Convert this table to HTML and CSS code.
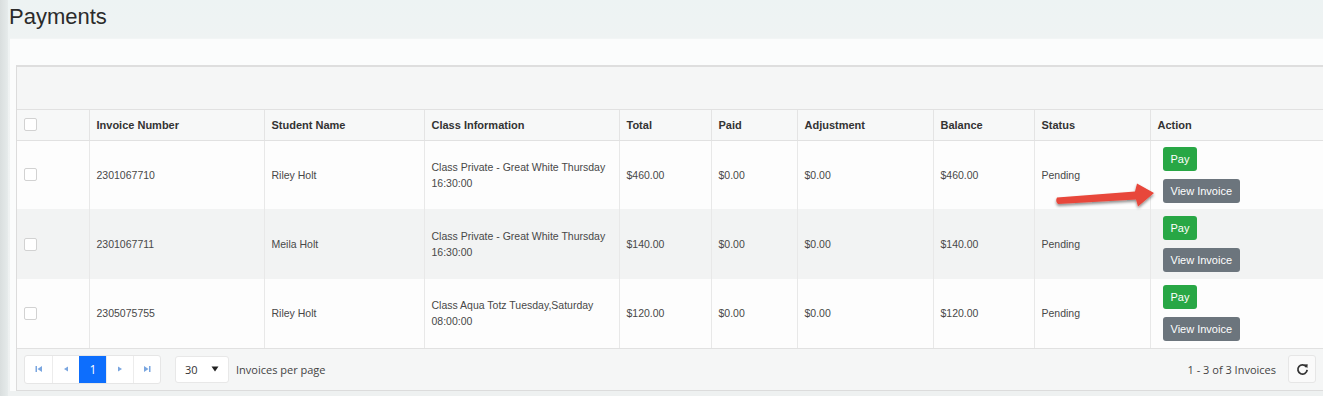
FILE: index.html
```html
<!DOCTYPE html>
<html lang="en">
<head>
<meta charset="utf-8">
<title>Payments</title>
<link rel="stylesheet" href="styles.css">
</head>
<body>
<div class="layout">
  <aside class="side"></aside>
  <main class="main">
    <h1 class="title">Payments</h1>
    <section class="card">
      <div class="grid">
        <div class="toolbar"></div>
        <table class="table">
          <colgroup>
            <col class="c-check"><col class="c-inv"><col class="c-name"><col class="c-class"><col class="c-total"><col class="c-paid"><col class="c-adj"><col class="c-bal"><col class="c-status"><col>
          </colgroup>
          <thead>
            <tr>
              <th><span class="check"></span></th>
              <th>Invoice Number</th>
              <th>Student Name</th>
              <th>Class Information</th>
              <th>Total</th>
              <th>Paid</th>
              <th>Adjustment</th>
              <th>Balance</th>
              <th>Status</th>
              <th>Action</th>
            </tr>
          </thead>
          <tbody>
            <tr>
              <td><span class="check"></span></td>
              <td>2301067710</td>
              <td>Riley Holt</td>
              <td>Class Private - Great White Thursday<br>16:30:00</td>
              <td>$460.00</td>
              <td>$0.00</td>
              <td>$0.00</td>
              <td>$460.00</td>
              <td>Pending</td>
              <td class="actions"><div class="btns"><button class="btn btn-pay">Pay</button><button class="btn btn-view">View Invoice</button></div></td>
            </tr>
            <tr class="alt">
              <td><span class="check"></span></td>
              <td>2301067711</td>
              <td>Meila Holt</td>
              <td>Class Private - Great White Thursday<br>16:30:00</td>
              <td>$140.00</td>
              <td>$0.00</td>
              <td>$0.00</td>
              <td>$140.00</td>
              <td>Pending</td>
              <td class="actions"><div class="btns"><button class="btn btn-pay">Pay</button><button class="btn btn-view">View Invoice</button></div></td>
            </tr>
            <tr>
              <td><span class="check"></span></td>
              <td>2305075755</td>
              <td>Riley Holt</td>
              <td>Class Aqua Totz Tuesday,Saturday<br>08:00:00</td>
              <td>$120.00</td>
              <td>$0.00</td>
              <td>$0.00</td>
              <td>$120.00</td>
              <td>Pending</td>
              <td class="actions"><div class="btns"><button class="btn btn-pay">Pay</button><button class="btn btn-view">View Invoice</button></div></td>
            </tr>
          </tbody>
        </table>
        <div class="pager">
          <div class="pager-left">
            <div class="pages">
              <span class="pg"><svg width="8" height="8" viewBox="0 0 8 8"><rect x="0.5" y="1" width="1.5" height="6" fill="#7aa6e0"/><path d="M7 1 L2.5 4 L7 7 Z" fill="#7aa6e0"/></svg></span>
              <span class="pg"><svg width="6" height="8" viewBox="0 0 6 8"><path d="M5 1.5 L1 4 L5 6.5 Z" fill="#7aa6e0"/></svg></span>
              <span class="pg pg-current">1</span>
              <span class="pg"><svg width="6" height="8" viewBox="0 0 6 8"><path d="M1 1.5 L5 4 L1 6.5 Z" fill="#7aa6e0"/></svg></span>
              <span class="pg"><svg width="8" height="8" viewBox="0 0 8 8"><path d="M1 1 L5.5 4 L1 7 Z" fill="#7aa6e0"/><rect x="6" y="1" width="1.5" height="6" fill="#7aa6e0"/></svg></span>
            </div>
            <div class="select"><span>30</span><svg width="8" height="6" viewBox="0 0 8 6"><path d="M0.5 0.5 L7.5 0.5 L4 5.5 Z" fill="#222"/></svg></div>
            <span class="per">Invoices per page</span>
          </div>
          <div class="pager-right">
            <span class="info">1 - 3 of 3 Invoices</span>
            <span class="refresh"><svg width="13" height="13" viewBox="0 0 14 14"><path d="M11.2 4.2 A5 5 0 1 0 12 7.5" fill="none" stroke="#333" stroke-width="1.9"/><path d="M8.6 1.6 L12.6 1.4 L12.2 5.6 Z" fill="#333"/></svg></span>
          </div>
        </div>
        <svg class="arrow" width="112" height="34" viewBox="0 0 112 34">
          <defs>
            <filter id="sh" x="-10%" y="-40%" width="130%" height="200%">
              <feDropShadow dx="0" dy="2" stdDeviation="1.4" flood-color="#000" flood-opacity="0.45"/>
            </filter>
          </defs>
          <path d="M6 17.5 Q4 21 7 24 L85 19.5 L87 26.5 L103 13 L86 3.5 L84 11.5 Z" fill="#e8473a" filter="url(#sh)"/>
        </svg>
      </div>
    </section>
  </main>
</div>
</body>
</html>
```
FILE: styles.css
```css
* { box-sizing: border-box; }
html, body {
  margin: 0;
  padding: 0;
  height: 100%;
  overflow: hidden;
}
body {
  background: #eef3f3;
  font-family: "Liberation Sans", Arial, sans-serif;
  color: #444;
}
.layout {
  display: flex;
  min-height: 100%;
}
.side {
  flex: 0 0 8px;
  background: linear-gradient(to right, #d9dede, #e6ebeb);
}
.main {
  flex: 1;
  min-width: 0;
  background: linear-gradient(to bottom, #edf3f3, #f0f3f3 60px, #eef1f1);
}
.title {
  margin: 0 0 0 1px;
  padding-top: 4px;
  height: 30px;
  font-size: 22px;
  line-height: 26px;
  font-weight: normal;
  color: #2b2b2b;
}
.card {
  margin: 8px -10px 0 2px;
  padding: 26px 9px 0 6px;
  background: #fbfcfc;
  border-top: 1px solid #f2f5f5;
}
.grid {
  position: relative;
  border: 1px solid #dcdcdc;
  border-top: 2px solid #dedede;
  background: #f5f6f6;
}
.toolbar {
  height: 43px;
  background: #f5f6f6;
  border-bottom: 1px solid #e1e1e1;
}
.table {
  width: 100%;
  border-collapse: collapse;
  table-layout: fixed;
  font-size: 10.5px;
}
.c-check { width: 72px; }
.c-inv { width: 175px; }
.c-name { width: 160px; }
.c-class { width: 195px; }
.c-total { width: 92px; }
.c-paid { width: 86px; }
.c-adj { width: 136px; }
.c-bal { width: 101px; }
.c-status { width: 116px; }
.table th {
  height: 30px;
  padding: 0 7px;
  text-align: left;
  font-size: 11px;
  font-weight: bold;
  color: #333;
  background: #f7f8f8;
  border-left: 1px solid #e4e4e4;
  border-bottom: 1px solid #e1e1e1;
}
.table th:first-child, .table td:first-child { border-left: none; }
.table td {
  height: 69px;
  padding: 0 7px;
  vertical-align: middle;
  line-height: 16px;
  color: #484848;
  background: #fdfdfd;
  border-left: 1px solid #e8e8e8;
}
.table tr.alt td { background: #f2f3f3; height: 70px; }
.table tbody tr:last-child td { border-bottom: 1px solid #e1e1e1; }
.check {
  display: block;
  width: 13px;
  height: 13px;
  border: 1px solid #d2d2d2;
  border-radius: 2px;
  background: #fff;
}
.table td.actions { padding-left: 12px; }
.btns {
  display: flex;
  flex-direction: column;
  align-items: flex-start;
  gap: 8px;
}
.btn {
  height: 24px;
  padding: 0 8px;
  border: none;
  border-radius: 3px;
  font-family: "Liberation Sans", Arial, sans-serif;
  font-size: 11px;
  color: #fff;
  line-height: 24px;
}
.btn-pay { background: #28a745; }
.btn-view { background: #6c757d; }
.pager {
  display: flex;
  justify-content: space-between;
  align-items: center;
  height: 41px;
  padding: 0 7px 0 7px;
  background: #f5f6f6;
  font-family: "Open Sans", sans-serif;
  font-size: 11px;
  color: #444;
}
.pager-left, .pager-right {
  display: flex;
  align-items: center;
}
.pages {
  display: flex;
  border: 1px solid #e6e6e6;
  border-radius: 3px;
  background: #fff;
}
.pg {
  width: 27px;
  height: 27px;
  display: flex;
  align-items: center;
  justify-content: center;
  border-left: 1px solid #ececec;
}
.pg:first-child { border-left: none; }
.pg-current {
  background: #0d6efd;
  color: #fff;
  font-size: 12px;
  border-left-color: #0d6efd;
}
.select {
  margin-left: 14px;
  width: 54px;
  height: 27px;
  display: flex;
  align-items: center;
  justify-content: space-between;
  padding: 0 9px 0 9px;
  background: #fff;
  border: 1px solid #e8e8e8;
  border-radius: 3px;
  font-size: 11px;
  color: #333;
}
.per {
  margin-left: 7px;
  font-size: 11px;
}
.info { font-size: 11px; }
.refresh {
  margin-left: 12px;
  width: 28px;
  height: 28px;
  display: flex;
  align-items: center;
  justify-content: center;
  background: #fafafa;
  border: 1px solid #e6e6e6;
  border-radius: 3px;
}
.arrow {
  position: absolute;
  left: 1034px;
  top: 113px;
}
```
